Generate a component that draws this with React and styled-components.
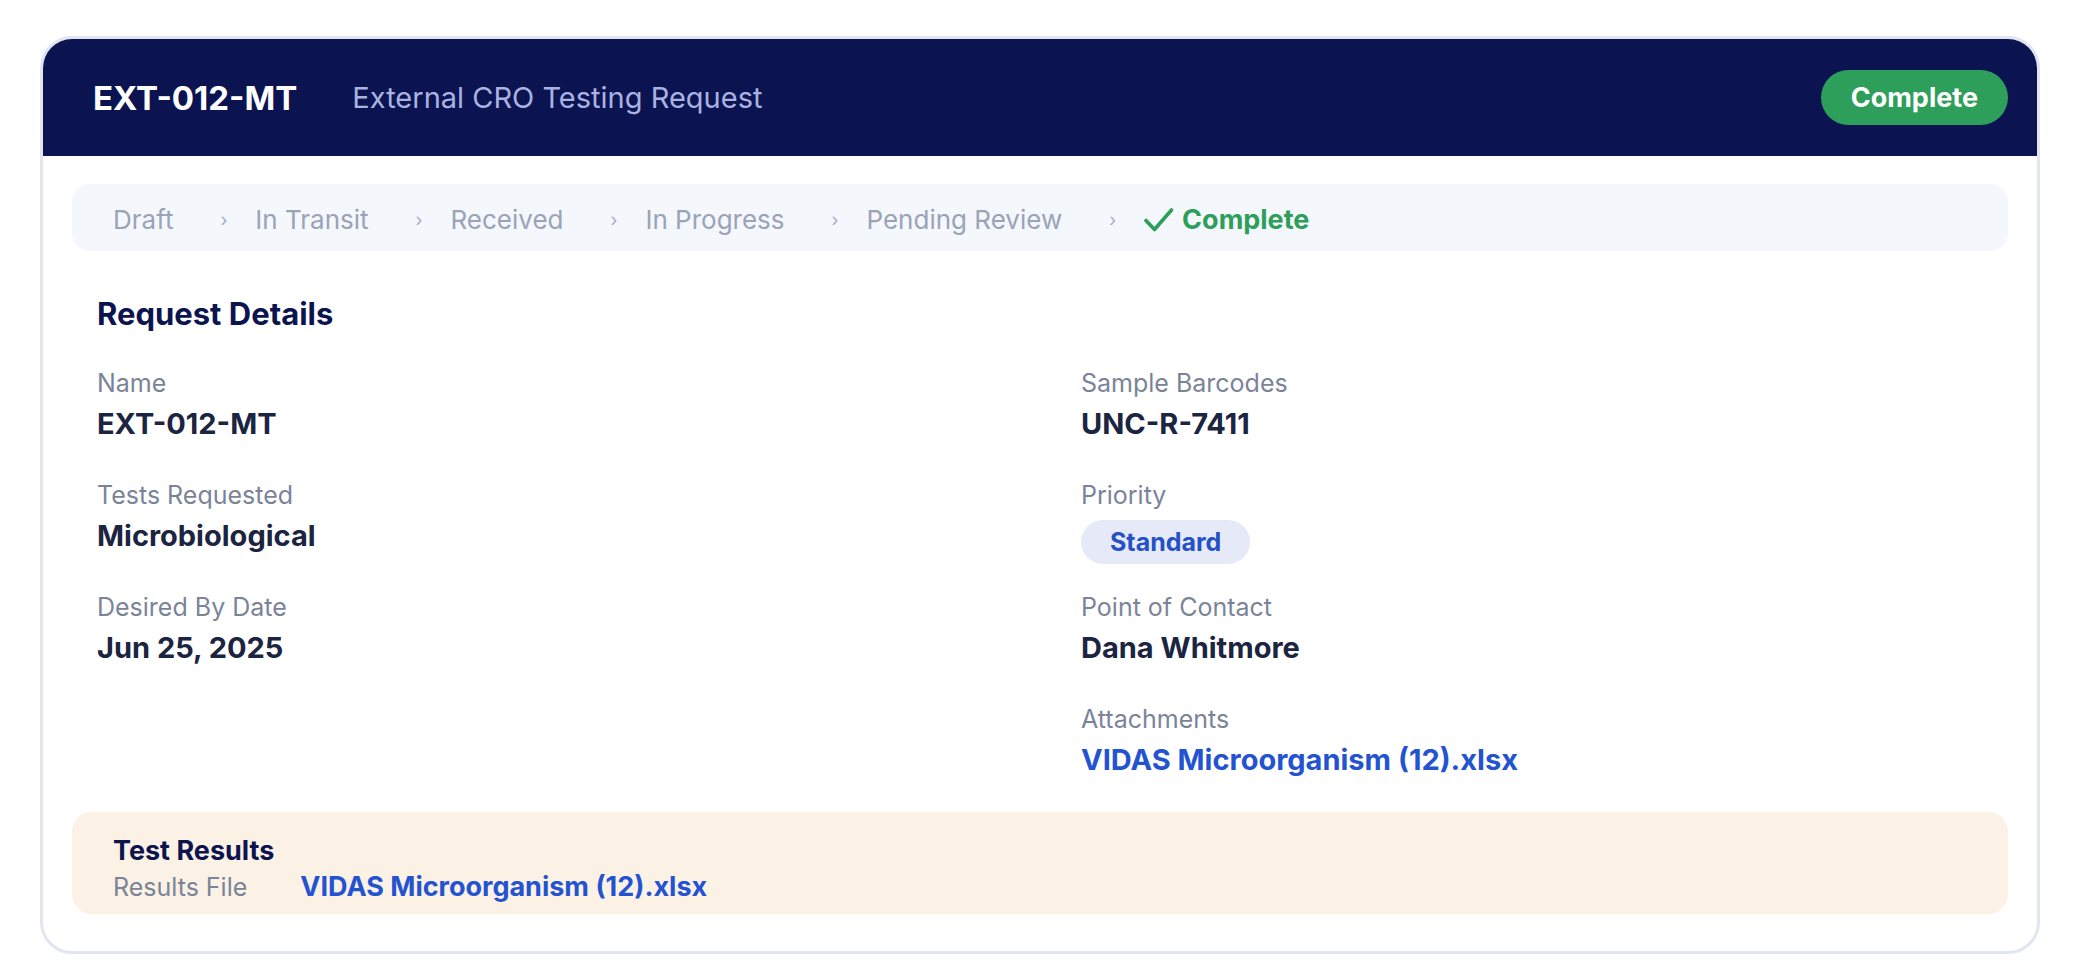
import React from "react";
import styled, { createGlobalStyle } from "styled-components";

const GlobalStyle = createGlobalStyle`
  body {
    margin: 0;
    background: #ffffff;
    font-family: Inter, "Open Sans", sans-serif;
  }
`;

const Page = styled.div`
  padding: 36px 40px 20px;
`;

const Card = styled.section`
  border: 3px solid #e3e5f0;
  border-radius: 32px;
  overflow: hidden;
  background: #ffffff;
`;

const Header = styled.header`
  height: 117px;
  background: #0b1450;
  display: flex;
  align-items: center;
  padding: 0 29px 0 50px;
`;

const Code = styled.h1`
  margin: 0;
  font-size: 33px;
  font-weight: 700;
  color: #ffffff;
`;

const Subtitle = styled.span`
  margin-left: 55px;
  font-size: 29px;
  color: #aab2e2;
  flex: 1;
`;

const StatusPill = styled.span`
  height: 55px;
  padding: 0 30px;
  border-radius: 28px;
  background: #2e9e5b;
  color: #ffffff;
  font-size: 27px;
  font-weight: 700;
  display: flex;
  align-items: center;
`;

const Body = styled.div`
  padding: 28px 29px 37px;
`;

const Stepper = styled.ol`
  margin: 0;
  list-style: none;
  height: 67px;
  box-sizing: border-box;
  border-radius: 18px;
  background: #f4f7fc;
  padding: 4px 41px 0;
  display: flex;
  align-items: center;
`;

const Step = styled.li`
  display: flex;
  align-items: center;
  font-size: ${(p) => (p.$done ? "27px" : "26px")};
  font-weight: ${(p) => (p.$done ? 700 : 400)};
  color: ${(p) => (p.$done ? "#2e9e5b" : "#9aa3b8")};
  gap: 8px;
`;

const Chevron = styled.span`
  font-size: 18px;
  color: #a4acc0;
  margin: 0 28px 0 47px;
`;

const Details = styled.div`
  padding: 0 25px;
`;

const Heading = styled.h2`
  margin: 44px 0 33px;
  font-size: 31px;
  line-height: 38px;
  font-weight: 700;
  color: #0c1450;
`;

const Grid = styled.div`
  display: grid;
  grid-template-columns: 1fr 1fr;
  column-gap: 82px;
`;

const Column = styled.div`
  display: flex;
  flex-direction: column;
  gap: 32px;
`;

const Field = styled.div`
  display: flex;
  flex-direction: column;
  align-items: flex-start;
  gap: 2px;
`;

const Label = styled.span`
  font-size: 25px;
  line-height: 34px;
  color: #7a8499;
`;

const Value = styled.span`
  font-size: ${(p) => p.$size || 29}px;
  line-height: 44px;
  font-weight: 700;
  color: ${(p) => (p.$link ? "#2453d1" : "#1b2440")};
`;

const PriorityTag = styled.span`
  height: 44px;
  margin: 6px 0 -6px;
  padding: 0 29px;
  border-radius: 22px;
  background: #e6eaf8;
  color: #2450c8;
  font-size: 25px;
  font-weight: 700;
  display: flex;
  align-items: center;
`;

const Results = styled.div`
  margin-top: 30px;
  background: #fbf1e4;
  border-radius: 20px;
  padding: 22px 41px 8px;
`;

const ResultsTitle = styled.div`
  font-size: 27px;
  line-height: 34px;
  font-weight: 700;
  color: #0c1450;
`;

const ResultsRow = styled.div`
  display: flex;
  align-items: center;
  height: 38px;
  gap: 53px;
`;

// tick drawn in front of the finished step
const Tick = () => (
  <svg width="30" height="26" viewBox="0 0 30 26" fill="none">
    <path
      d="M2 13.5 10.5 22.5 27.5 3"
      stroke="currentColor"
      strokeWidth="3.6"
      strokeLinecap="round"
      strokeLinejoin="round"
    />
  </svg>
);

const steps = ["Draft", "In Transit", "Received", "In Progress", "Pending Review"];

const left = [
  { label: "Name", value: "EXT-012-MT" },
  { label: "Tests Requested", value: "Microbiological" },
  { label: "Desired By Date", value: "Jun 25, 2025" },
];

export default function App() {
  return (
    <Page>
      <GlobalStyle />
      <Card>
        <Header>
          <Code>EXT-012-MT</Code>
          <Subtitle>External CRO Testing Request</Subtitle>
          <StatusPill>Complete</StatusPill>
        </Header>
        <Body>
          <Stepper>
            {steps.map((s) => (
              <React.Fragment key={s}>
                <Step>{s}</Step>
                <Chevron>›</Chevron>
              </React.Fragment>
            ))}
            <Step $done>
              <Tick />
              Complete
            </Step>
          </Stepper>

          <Details>
            <Heading>Request Details</Heading>
            <Grid>
              <Column>
                {left.map((f) => (
                  <Field key={f.label}>
                    <Label>{f.label}</Label>
                    <Value>{f.value}</Value>
                  </Field>
                ))}
              </Column>
              <Column>
                <Field>
                  <Label>Sample Barcodes</Label>
                  <Value>UNC-R-7411</Value>
                </Field>
                <Field>
                  <Label>Priority</Label>
                  <PriorityTag>Standard</PriorityTag>
                </Field>
                <Field>
                  <Label>Point of Contact</Label>
                  <Value>Dana Whitmore</Value>
                </Field>
                <Field>
                  <Label>Attachments</Label>
                  <Value $link>VIDAS Microorganism (12).xlsx</Value>
                </Field>
              </Column>
            </Grid>
          </Details>

          <Results>
            <ResultsTitle>Test Results</ResultsTitle>
            <ResultsRow>
              <Label>Results File</Label>
              <Value $link $size={27}>
                VIDAS Microorganism (12).xlsx
              </Value>
            </ResultsRow>
          </Results>
        </Body>
      </Card>
    </Page>
  );
}
